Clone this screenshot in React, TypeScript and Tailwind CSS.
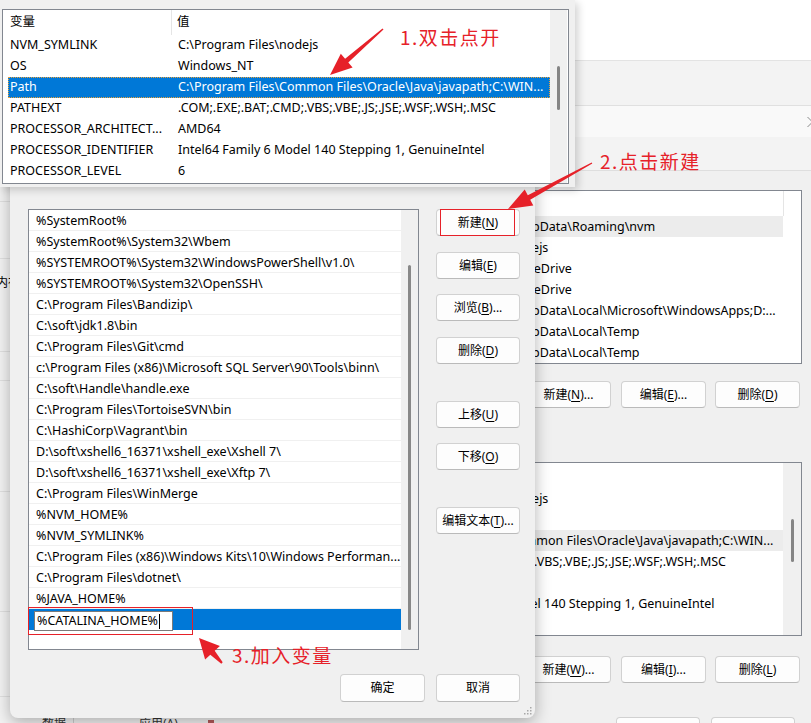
import React from 'react';

const UI = "font-['Noto_Sans','Noto_Sans_CJK_SC',sans-serif]";
const NOTE = "font-['Noto_Sans_CJK_SC','Noto_Sans',sans-serif]";

const pathEntries = [
  '%SystemRoot%',
  '%SystemRoot%\\System32\\Wbem',
  '%SYSTEMROOT%\\System32\\WindowsPowerShell\\v1.0\\',
  '%SYSTEMROOT%\\System32\\OpenSSH\\',
  'C:\\Program Files\\Bandizip\\',
  'C:\\soft\\jdk1.8\\bin',
  'C:\\Program Files\\Git\\cmd',
  'c:\\Program Files (x86)\\Microsoft SQL Server\\90\\Tools\\binn\\',
  'C:\\soft\\Handle\\handle.exe',
  'C:\\Program Files\\TortoiseSVN\\bin',
  'C:\\HashiCorp\\Vagrant\\bin',
  'D:\\soft\\xshell6_16371\\xshell_exe\\Xshell 7\\',
  'D:\\soft\\xshell6_16371\\xshell_exe\\Xftp 7\\',
  'C:\\Program Files\\WinMerge',
  '%NVM_HOME%',
  '%NVM_SYMLINK%',
  'C:\\Program Files (x86)\\Windows Kits\\10\\Windows Performan...',
  'C:\\Program Files\\dotnet\\',
  '%JAVA_HOME%',
];

const sysVars = [
  ['NVM_SYMLINK', 'C:\\Program Files\\nodejs'],
  ['OS', 'Windows_NT'],
  ['Path', 'C:\\Program Files\\Common Files\\Oracle\\Java\\javapath;C:\\WIN...'],
  ['PATHEXT', '.COM;.EXE;.BAT;.CMD;.VBS;.VBE;.JS;.JSE;.WSF;.WSH;.MSC'],
  ['PROCESSOR_ARCHITECT...', 'AMD64'],
  ['PROCESSOR_IDENTIFIER', 'Intel64 Family 6 Model 140 Stepping 1, GenuineIntel'],
  ['PROCESSOR_LEVEL', '6'],
];

const userVals = [
  'C:\\Users\\wangwu\\AppData\\Roaming\\nvm',
  'C:\\Program Files\\nodejs',
  'C:\\Users\\wangwu\\OneDrive',
  'C:\\Users\\wangwu\\OneDrive',
  'C:\\Users\\wangwu\\AppData\\Local\\Microsoft\\WindowsApps;D:...',
  'C:\\Users\\wangwu\\AppData\\Local\\Temp',
  'C:\\Users\\wangwu\\AppData\\Local\\Temp',
];

function Mn({ a, k, b = '' }: { a: string; k: string; b?: string }) {
  return (
    <span>
      {a}
      <span className="underline underline-offset-[2px]">{k}</span>
      {b}
    </span>
  );
}

function Btn({ children, className = '' }: { children: React.ReactNode; className?: string }) {
  return (
    <div
      className={`relative flex shrink-0 items-center justify-center rounded-[4px] border border-[#d1d1d1] border-b-[#bababa] bg-[#fdfdfd] text-[12px] leading-none text-black ${className}`}
    >
      {children}
    </div>
  );
}

// list of the environment-variables window, only the value column shows
function VarList({ values, hi, scroll }: { values: string[]; hi: number; scroll: boolean }) {
  return (
    <div className="flex h-[174px] border border-[#828790] bg-white">
      <div className="min-w-0 flex-1">
        <div className="h-[25px]" />
        {values.map((v, i) => (
          <div
            key={i}
            className={`flex h-[21px] items-center overflow-hidden whitespace-nowrap pl-[11px] pt-[1px] ${i === hi ? 'bg-[#ececec]' : ''}`}
          >
            {v}
          </div>
        ))}
      </div>
      {scroll ? (
        <div className="w-[18px] bg-[#f0f0f0] pt-[56px]">
          <div className="mx-auto h-[43px] w-[3px] rounded-full bg-[#858585]" />
        </div>
      ) : (
        <div className="w-[18px]">
          <div className="h-[25px] border-l border-[#e5e5e5]" />
        </div>
      )}
    </div>
  );
}

export default function App() {
  return (
    <div className={`relative h-[723px] w-[811px] overflow-hidden bg-[#f3f3f3] text-[12.5px] text-black ${UI}`}>
      {/* page behind the dialogs */}
      <div className="absolute inset-0 flex flex-col">
        <div className="h-[60px] bg-white" />
        <div className="h-[45px] border-t border-[#e3e3e3] bg-[#f3f3f3]" />
        <div className="flex h-[32px] items-center justify-end border-t border-[#e0e0e0] bg-[#f9f9f9]">
          <svg className="-mr-[3px]" width="8" height="12" viewBox="0 0 8 12">
            <path d="M1.5 1 L6.5 6 L1.5 11" stroke="#8a8a8a" strokeWidth="1" fill="none" />
          </svg>
        </div>
        <div className="flex flex-1 bg-[#f3f3f3]">
          <div className="flex w-[10px] flex-col overflow-hidden">
            <div className="h-[65px] shrink-0 border-b border-[#e0e0e0]" />
            <div className="h-[57px] shrink-0 border-b border-[#e0e0e0]" />
            <div className="h-[93px] shrink-0 border-b border-[#e0e0e0] pt-[17px]">
              <div className="-ml-[4px] whitespace-nowrap text-[12px] leading-[14px]">内存</div>
            </div>
            <div className="h-[29px] shrink-0 border-b border-[#e0e0e0]" />
            <div className="h-[111px] shrink-0 border-b border-[#e0e0e0]" />
            <div className="h-[120px] shrink-0 border-b border-[#e0e0e0]" />
            <div className="h-[85px] shrink-0 border-b border-[#e0e0e0]" />
          </div>
          <div className="flex flex-1 flex-col justify-end">
            <div className="flex h-[7px] items-start overflow-hidden text-[12px] leading-[16px] text-[#333]">
              <span className="ml-[32px]">数据</span>
              <div className="ml-[7px] h-full border-l border-[#cfcfcf]" />
              <span className="ml-[65px]">应用(A)</span>
              <div className="ml-[30px] mt-[4px] h-[4px] w-[6px] bg-[#b55a5a]" />
            </div>
          </div>
        </div>
      </div>

      {/* environment variables window */}
      <div className="absolute bottom-0 left-[390px] right-0 top-[170px] z-10 flex flex-col border-t border-[#dedede] bg-[#f0f0f0] pl-[6px] pr-[9px] pt-[19px]">
        <VarList values={userVals} hi={0} scroll={false} />
        <div className="mr-[2px] mt-[17px] flex justify-end">
          <Btn className="h-[27px] w-[85px]"><Mn a="新建(" k="N" b=")..." /></Btn>
          <Btn className="ml-[10px] h-[27px] w-[85px]"><Mn a="编辑(" k="E" b=")..." /></Btn>
          <Btn className="ml-[9px] h-[27px] w-[85px]"><Mn a="删除(" k="D" b=")" /></Btn>
        </div>
        <div className="-ml-[6px] -mr-[9px] mt-[36px] h-px bg-[#dcdcdc]" />
        <div className="mt-[18px]">
          <VarList values={sysVars.map((r) => r[1])} hi={2} scroll />
        </div>
        <div className="mr-[2px] mt-[20px] flex justify-end">
          <Btn className="h-[27px] w-[85px]"><Mn a="新建(" k="W" b=")..." /></Btn>
          <Btn className="ml-[10px] h-[27px] w-[85px]"><Mn a="编辑(" k="I" b=")..." /></Btn>
          <Btn className="ml-[9px] h-[27px] w-[85px]"><Mn a="删除(" k="L" b=")" /></Btn>
        </div>
        <div className="-ml-[6px] -mr-[9px] mt-[17px] h-px bg-[#dcdcdc]" />
        <div className="mr-[7px] mt-[17px] flex justify-end gap-[11px]">
          <Btn className="h-[27px] w-[84px]">确定</Btn>
          <Btn className="h-[27px] w-[84px]">取消</Btn>
        </div>
      </div>

      {/* edit environment variable dialog */}
      <div className="absolute left-[10px] top-[150px] z-20 flex h-[568px] w-[525px] flex-col rounded-b-[8px] bg-[#f0f0f0] pl-[18px] pr-[15px] pt-[59px] shadow-[0_4px_16px_rgba(0,0,0,0.3)]">
        <div className="flex">
          <div className="relative flex h-[441px] w-[391px] border border-[#828790] bg-white">
            <div className="w-[372px]">
              {pathEntries.map((e) => (
                <div
                  key={e}
                  className="flex h-[21px] items-center overflow-hidden whitespace-nowrap border-b border-[#f0f0f0] pl-[7px] pt-[3px]"
                >
                  {e}
                </div>
              ))}
              <div className="flex h-[21px] items-start bg-[#0078d7] pl-[5px] pt-[2px]">
                <div className="flex h-[20px] w-[139px] items-center border border-[#7a7a7a] bg-white pl-[2px]">
                  %CATALINA_HOME%
                  <span className="ml-[1px] h-[15px] w-px bg-black" />
                </div>
              </div>
            </div>
            <div className="w-[17px] bg-[#f0f0f0] pt-[55px]">
              <div className="mx-auto h-[365px] w-[3px] rounded-full bg-[#888888]" />
            </div>
            <div className="absolute left-[-1px] top-[397px] h-[28px] w-[165px] border border-[#e62129]" />
          </div>
          <div className="ml-[17px] flex w-[84px] flex-col">
            <Btn className="h-[27px]">
              <Mn a="新建(" k="N" b=")" />
              <div className="absolute left-[3px] top-[-1px] h-[27px] w-[75px] border border-[#e62129]" />
            </Btn>
            <Btn className="mt-[16px] h-[27px]"><Mn a="编辑(" k="E" b=")" /></Btn>
            <Btn className="mt-[15px] h-[27px]"><Mn a="浏览(" k="B" b=")..." /></Btn>
            <Btn className="mt-[16px] h-[27px]"><Mn a="删除(" k="D" b=")" /></Btn>
            <Btn className="mt-[37px] h-[27px]"><Mn a="上移(" k="U" b=")" /></Btn>
            <Btn className="mt-[15px] h-[27px]"><Mn a="下移(" k="O" b=")" /></Btn>
            <Btn className="mt-[37px] h-[27px]"><Mn a="编辑文本(" k="T" b=")..." /></Btn>
          </div>
        </div>
        <div className="mt-[24px] flex justify-end gap-[11px]">
          <Btn className="h-[28px] w-[85px] border-[#0067c0] border-b-[#0067c0]">确定</Btn>
          <Btn className="h-[28px] w-[84px]">取消</Btn>
        </div>
        <svg className="absolute bottom-[3px] right-[3px]" width="9" height="9" viewBox="0 0 9 9">
          <g fill="#a8a8a8">
            <rect x="7" y="1" width="1.5" height="1.5" />
            <rect x="4" y="4" width="1.5" height="1.5" />
            <rect x="7" y="4" width="1.5" height="1.5" />
            <rect x="1" y="7" width="1.5" height="1.5" />
            <rect x="4" y="7" width="1.5" height="1.5" />
            <rect x="7" y="7" width="1.5" height="1.5" />
          </g>
        </svg>
      </div>

      {/* zoomed variable list pasted on top */}
      <div className="absolute left-0 top-0 z-30 h-[187px] w-[575px] bg-[#f0f0f0] pl-[2px] pt-[9px] shadow-[3px_3px_8px_rgba(0,0,0,0.18)]">
        <div className="flex h-[175px] w-[567px] border border-[#828790] bg-white">
          <div className="w-[547px]">
            <div className="flex h-[25px] items-center">
              <div className="flex h-full w-[169px] items-center border-r border-[#e5e5e5] pl-[7px]">变量</div>
              <div className="pl-[5px]">值</div>
            </div>
            {sysVars.map(([n, v]) => (
              <div
                key={n}
                className={`ml-[5px] flex h-[21px] items-center whitespace-nowrap ${
                  n === 'Path'
                    ? 'bg-[#0078d7] text-white outline-1 -outline-offset-1 outline-dotted outline-[#e8a23c]'
                    : ''
                }`}
              >
                <div className="w-[170px] pl-[2px]">{n}</div>
                <div>{v}</div>
              </div>
            ))}
          </div>
          <div className="w-[17px] bg-[#f0f0f0] pt-[56px]">
            <div className="mx-auto h-[44px] w-[3px] rounded-full bg-[#858585]" />
          </div>
        </div>
      </div>

      {/* red annotations */}
      <svg className="pointer-events-none absolute inset-0 z-40" width="811" height="723" viewBox="0 0 811 723">
        <g fill="#e62129">
          <polygon points="383.5,29.5 348.3,62.5 352.6,67.4 330,75 340.8,53.8 345.1,58.7 382.5,28.5" />
          <polygon points="592.3,163.6 530.2,199.7 533.3,205.4 508,209 524.7,189.6 527.8,195.3 591.7,162.4" />
          <polygon points="222.7,662.3 214.7,650.7 219.9,645.9 199,638 205.1,659.5 210.3,654.7 221.3,663.7" />
        </g>
      </svg>
      <div className={`absolute left-[400px] top-[27px] z-40 text-[19px] leading-[20px] tracking-[1.5px] text-[#e62129] ${NOTE}`}>
        1.双击点开
      </div>
      <div className={`absolute left-[600px] top-[151px] z-40 text-[19px] leading-[20px] tracking-[1.5px] text-[#e62129] ${NOTE}`}>
        2.点击新建
      </div>
      <div className={`absolute left-[232px] top-[645px] z-40 text-[19px] leading-[20px] tracking-[1.5px] text-[#e62129] ${NOTE}`}>
        3.加入变量
      </div>
    </div>
  );
}
